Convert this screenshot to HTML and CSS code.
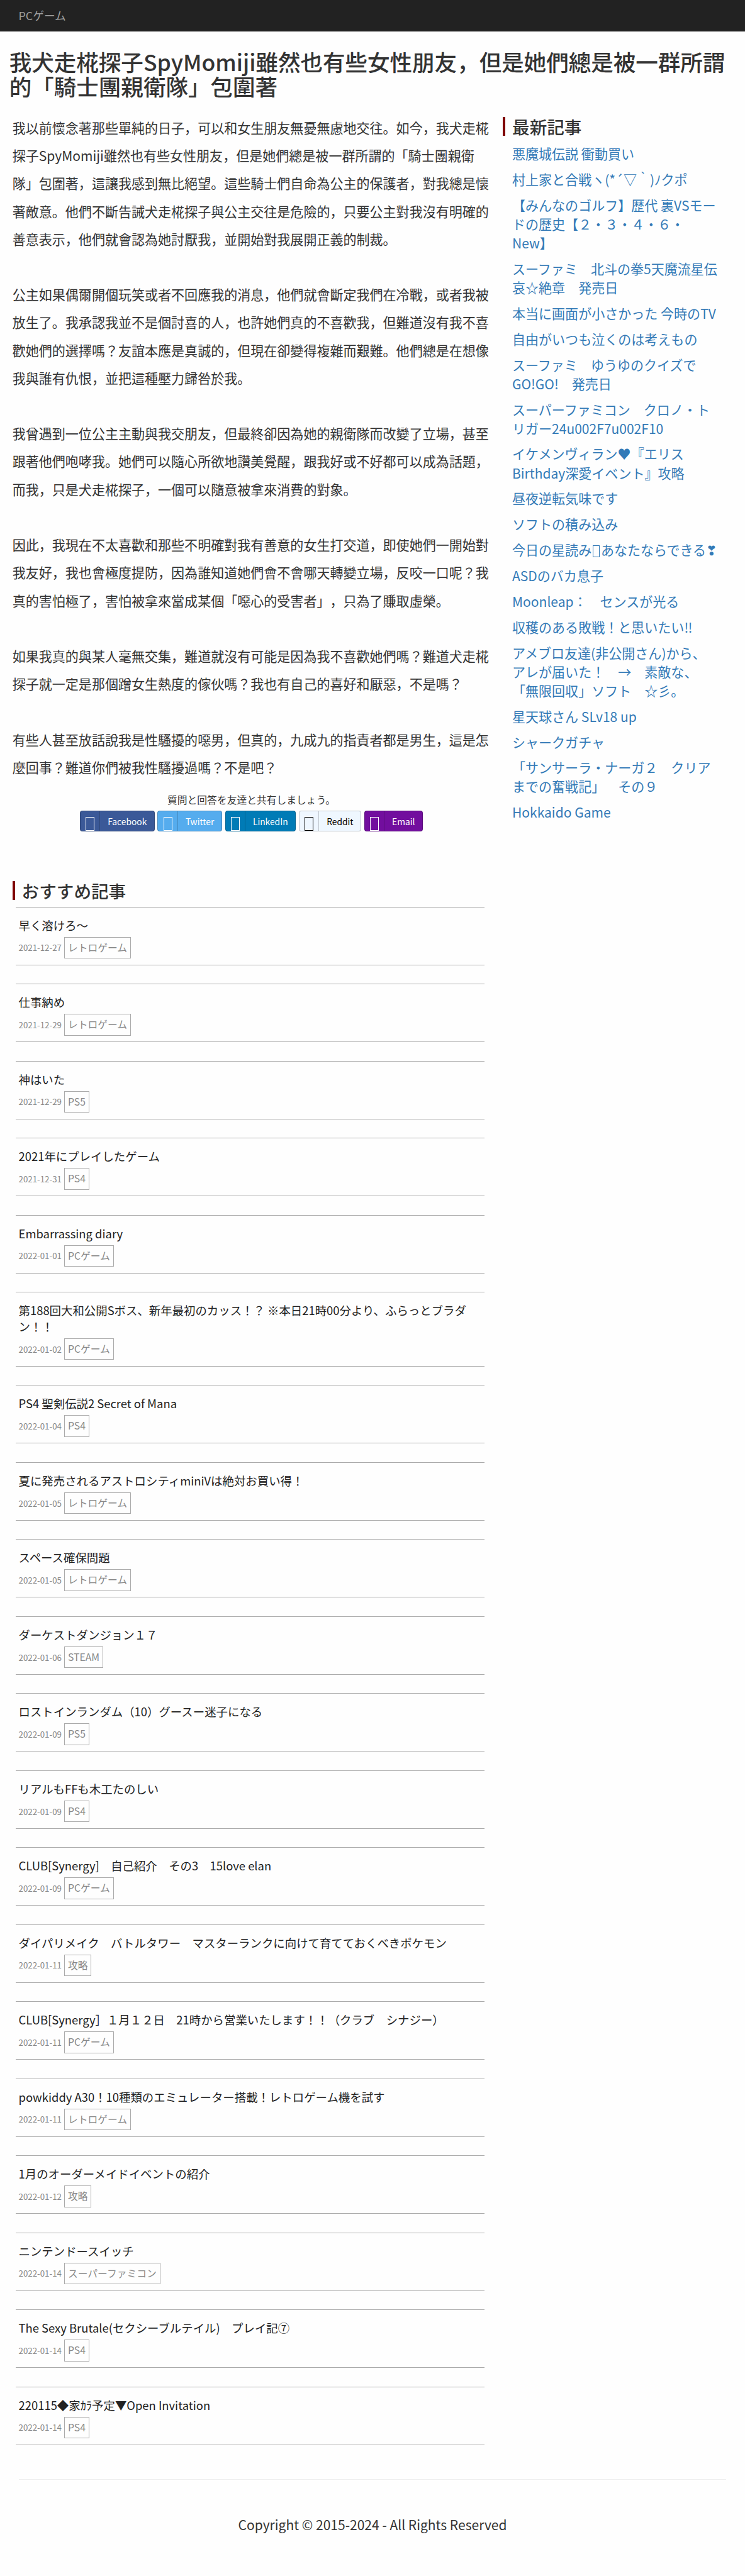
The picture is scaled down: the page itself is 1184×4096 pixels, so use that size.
FILE: index.html
```html
<!DOCTYPE html>
<html lang="ja">
<head>
    <meta charset="UTF-8">
    <meta name="viewport" content="width=device-width, initial-scale=1.0">
    <title>我犬走椛探子SpyMomiji</title>
    <link rel="stylesheet" href="styles.css">
</head>
<body>
    <nav class="navbar">
        <a class="navbar-brand" href="#">PCゲーム</a>
    </nav>

    <h1 class="page-title">我犬走椛探子SpyMomiji雖然也有些女性朋友，但是她們總是被一群所謂的「騎士團親衛隊」包圍著</h1>

    <div class="row">
        <main class="content">
            <div class="article">
                我以前懷念著那些單純的日子，可以和女生朋友無憂無慮地交往。如今，我犬走椛探子SpyMomiji雖然也有些女性朋友，但是她們總是被一群所謂的「騎士團親衛隊」包圍著，這讓我感到無比絕望。這些騎士們自命為公主的保護者，對我總是懷著敵意。他們不斷告誡犬走椛探子與公主交往是危險的，只要公主對我沒有明確的善意表示，他們就會認為她討厭我，並開始對我展開正義的制裁。<br><br>
                公主如果偶爾開個玩笑或者不回應我的消息，他們就會斷定我們在冷戰，或者我被放生了。我承認我並不是個討喜的人，也許她們真的不喜歡我，但難道沒有我不喜歡她們的選擇嗎？友誼本應是真誠的，但現在卻變得複雜而艱難。他們總是在想像我與誰有仇恨，並把這種壓力歸咎於我。<br><br>
                我曾遇到一位公主主動與我交朋友，但最終卻因為她的親衛隊而改變了立場，甚至跟著他們咆哮我。她們可以隨心所欲地讚美覺醒，跟我好或不好都可以成為話題，而我，只是犬走椛探子，一個可以隨意被拿來消費的對象。<br><br>
                因此，我現在不太喜歡和那些不明確對我有善意的女生打交道，即使她們一開始對我友好，我也會極度提防，因為誰知道她們會不會哪天轉變立場，反咬一口呢？我真的害怕極了，害怕被拿來當成某個「噁心的受害者」，只為了賺取虛榮。<br><br>
                如果我真的與某人毫無交集，難道就沒有可能是因為我不喜歡她們嗎？難道犬走椛探子就一定是那個蹭女生熱度的傢伙嗎？我也有自己的喜好和厭惡，不是嗎？<br><br>
                有些人甚至放話說我是性騷擾的噁男，但真的，九成九的指責者都是男生，這是怎麼回事？難道你們被我性騷擾過嗎？不是吧？
            </div>

            <div class="share">
                <p>質問と回答を友達と共有しましょう。</p>
                <div class="share-buttons">
                    <a class="btn facebook" href="#"><span class="icon"></span><span class="label">Facebook</span></a>
                    <a class="btn twitter" href="#"><span class="icon"></span><span class="label">Twitter</span></a>
                    <a class="btn linkedin" href="#"><span class="icon"></span><span class="label">LinkedIn</span></a>
                    <a class="btn reddit" href="#"><span class="icon"></span><span class="label">Reddit</span></a>
                    <a class="btn email" href="#"><span class="icon"></span><span class="label">Email</span></a>
                </div>
            </div>

            <h3 class="section-title">おすすめ記事</h3>
            <div class="posts">
                <div class="post">
                    <a class="post-title" href="#">早く溶けろ～</a>
                    <div class="meta"><span class="date">2021-12-27</span> <span class="tag">レトロゲーム</span></div>
                </div>
                <div class="post">
                    <a class="post-title" href="#">仕事納め</a>
                    <div class="meta"><span class="date">2021-12-29</span> <span class="tag">レトロゲーム</span></div>
                </div>
                <div class="post">
                    <a class="post-title" href="#">神はいた</a>
                    <div class="meta"><span class="date">2021-12-29</span> <span class="tag">PS5</span></div>
                </div>
                <div class="post">
                    <a class="post-title" href="#">2021年にプレイしたゲーム</a>
                    <div class="meta"><span class="date">2021-12-31</span> <span class="tag">PS4</span></div>
                </div>
                <div class="post">
                    <a class="post-title" href="#">Embarrassing diary</a>
                    <div class="meta"><span class="date">2022-01-01</span> <span class="tag">PCゲーム</span></div>
                </div>
                <div class="post">
                    <a class="post-title" href="#">第188回大和公開Sボス、新年最初のカッス！？ ※本日21時00分より、ふらっとブラダン！！</a>
                    <div class="meta"><span class="date">2022-01-02</span> <span class="tag">PCゲーム</span></div>
                </div>
                <div class="post">
                    <a class="post-title" href="#">PS4 聖剣伝説2 Secret of Mana</a>
                    <div class="meta"><span class="date">2022-01-04</span> <span class="tag">PS4</span></div>
                </div>
                <div class="post">
                    <a class="post-title" href="#">夏に発売されるアストロシティminiVは絶対お買い得！</a>
                    <div class="meta"><span class="date">2022-01-05</span> <span class="tag">レトロゲーム</span></div>
                </div>
                <div class="post">
                    <a class="post-title" href="#">スペース確保問題</a>
                    <div class="meta"><span class="date">2022-01-05</span> <span class="tag">レトロゲーム</span></div>
                </div>
                <div class="post">
                    <a class="post-title" href="#">ダーケストダンジョン１７</a>
                    <div class="meta"><span class="date">2022-01-06</span> <span class="tag">STEAM</span></div>
                </div>
                <div class="post">
                    <a class="post-title" href="#">ロストインランダム（10）グースー迷子になる</a>
                    <div class="meta"><span class="date">2022-01-09</span> <span class="tag">PS5</span></div>
                </div>
                <div class="post">
                    <a class="post-title" href="#">リアルもFFも木工たのしい</a>
                    <div class="meta"><span class="date">2022-01-09</span> <span class="tag">PS4</span></div>
                </div>
                <div class="post">
                    <a class="post-title" href="#">CLUB[Synergy]　自己紹介　その3　15love elan</a>
                    <div class="meta"><span class="date">2022-01-09</span> <span class="tag">PCゲーム</span></div>
                </div>
                <div class="post">
                    <a class="post-title" href="#">ダイパリメイク　バトルタワー　マスターランクに向けて育てておくべきポケモン</a>
                    <div class="meta"><span class="date">2022-01-11</span> <span class="tag">攻略</span></div>
                </div>
                <div class="post">
                    <a class="post-title" href="#">CLUB[Synergy］１月１２日　21時から営業いたします！！（クラブ　シナジー）</a>
                    <div class="meta"><span class="date">2022-01-11</span> <span class="tag">PCゲーム</span></div>
                </div>
                <div class="post">
                    <a class="post-title" href="#">powkiddy A30！10種類のエミュレーター搭載！レトロゲーム機を試す</a>
                    <div class="meta"><span class="date">2022-01-11</span> <span class="tag">レトロゲーム</span></div>
                </div>
                <div class="post">
                    <a class="post-title" href="#">1月のオーダーメイドイベントの紹介</a>
                    <div class="meta"><span class="date">2022-01-12</span> <span class="tag">攻略</span></div>
                </div>
                <div class="post">
                    <a class="post-title" href="#">ニンテンドースイッチ</a>
                    <div class="meta"><span class="date">2022-01-14</span> <span class="tag">スーパーファミコン</span></div>
                </div>
                <div class="post">
                    <a class="post-title" href="#">The Sexy Brutale(セクシーブルテイル)　プレイ記⑦</a>
                    <div class="meta"><span class="date">2022-01-14</span> <span class="tag">PS4</span></div>
                </div>
                <div class="post">
                    <a class="post-title" href="#">220115◆家ｶﾗ予定▼Open Invitation</a>
                    <div class="meta"><span class="date">2022-01-14</span> <span class="tag">PS4</span></div>
                </div>
            </div>
        </main>

        <aside class="sidebar">
            <h3 class="section-title">最新記事</h3>
            <ul class="latest">
                <li><a href="#">悪魔城伝説 衝動買い</a></li>
                <li><a href="#">村上家と合戦ヽ(*´▽｀)ﾉクポ</a></li>
                <li><a href="#">【みんなのゴルフ】歴代 裏VSモー<br>ドの歴史【２・３・４・６・<br>New】</a></li>
                <li><a href="#">スーファミ　北斗の拳5天魔流星伝<br>哀☆絶章　発売日</a></li>
                <li><a href="#">本当に画面が小さかった 今時のTV</a></li>
                <li><a href="#">自由がいつも泣くのは考えもの</a></li>
                <li><a href="#">スーファミ　ゆうゆのクイズで<br>GO!GO!　発売日</a></li>
                <li><a href="#">スーパーファミコン　クロノ・ト<br>リガー24u002F7u002F10</a></li>
                <li><a href="#">イケメンヴィラン♥『エリス<br>Birthday深愛イベント』攻略</a></li>
                <li><a href="#">昼夜逆転気味です</a></li>
                <li><a href="#">ソフトの積み込み</a></li>
                <li><a href="#">今日の星読み<span class="glyph-box"></span>あなたならできる&#x2763;</a></li>
                <li><a href="#">ASDのバカ息子</a></li>
                <li><a href="#">Moonleap：　センスが光る</a></li>
                <li><a href="#">収穫のある敗戦！と思いたい‼</a></li>
                <li><a href="#">アメブロ友達(非公開さん)から、<br>アレが届いた！　→　素敵な、<br>「無限回収」ソフト　☆彡。</a></li>
                <li><a href="#">星天球さん SLv18 up</a></li>
                <li><a href="#">シャークガチャ</a></li>
                <li><a href="#">「サンサーラ・ナーガ２　クリア<br>までの奮戦記」　その９</a></li>
                <li><a href="#">Hokkaido Game</a></li>
            </ul>
        </aside>
    </div>

    <footer class="footer">
        <p>Copyright © 2015-2024 - All Rights Reserved</p>
    </footer>
</body>
</html>
```
FILE: styles.css
```css
* {
    box-sizing: border-box;
}

html {
    background: #fefefe;
}

body {
    margin: 0;
    width: 1200px;
    zoom: 0.98667;
    background: #fefefe;
    color: #333;
    font-family: "Noto Sans CJK JP", "Noto Sans CJK TC", sans-serif;
    font-size: 21.33px;
    line-height: 1.42857;
    text-spacing-trim: space-all;
}

a {
    color: #337ab7;
    text-decoration: none;
}

.navbar {
    height: 51px;
    padding: 15px 30px;
    background: #222;
    border-bottom: 1px solid #080808;
    line-height: 20px;
}

.navbar-brand {
    display: block;
    color: #9d9d9d;
    font-size: 18px;
}

.page-title {
    margin: 28px 15px 0;
    font-size: 36px;
    font-weight: 500;
    line-height: 40px;
}

.row {
    display: flex;
    padding-top: 24.5px;
}

.content {
    width: 810px;
    padding: 0 20px;
}

.article {
    width: 770px;
    line-height: 44.8px;
}

.share {
    margin-top: 19.5px;
    width: 770px;
    text-align: center;
    font-size: 16px;
}

.share p {
    margin: 0 0 5px;
}

.share-buttons {
    display: flex;
    justify-content: center;
    gap: 4.4px;
}

.btn {
    display: flex;
    height: 34px;
    border: 1px solid rgba(0, 0, 0, 0.2);
    border-radius: 4px;
    color: #fff;
    line-height: 33px;
}

.btn .icon {
    display: flex;
    justify-content: center;
    width: 32px;
    padding-top: 10px;
    border-right: 1px solid rgba(0, 0, 0, 0.2);
}

.btn .icon::before {
    content: "";
    width: 12px;
    height: 20px;
    border: 1px solid currentColor;
}

.btn .label {
    padding: 0 12px;
    font-size: 14px;
}

.facebook {
    background: #3b5998;
}

.twitter {
    background: #55acee;
}

.linkedin {
    background: #007bb6;
}

.reddit {
    background: #eff7ff;
    color: #000;
}

.email {
    background: #720e9e;
}

.section-title {
    margin: 80px 0 10.5px;
    padding-left: 11px;
    border-left: 5px solid #800000;
    font-size: 28px;
    font-weight: 500;
    line-height: 1.1;
}

.posts {
    margin: 0 10px 0 5px;
}

.post {
    margin-bottom: 30px;
    padding: 16px 5px 9.7px;
    border-top: 1px solid #aaa;
    border-bottom: 1px solid #aaa;
}

.post-title {
    display: block;
    color: #222;
    font-size: 18.67px;
    line-height: 26.1px;
}

.meta {
    display: flex;
    align-items: center;
    gap: 4.2px;
    margin-top: 5.5px;
    color: #888;
}

.date {
    font-size: 13.5px;
}

.tag {
    padding: 5px;
    border: 1px solid #aaa;
    font-size: 16px;
}

.sidebar {
    width: 390px;
}

.sidebar .section-title {
    margin: 5px 0 13px;
}

.latest {
    margin: 0 0 0 15px;
    padding: 0;
    list-style: none;
}

.latest li {
    margin-bottom: 10.97px;
    white-space: nowrap;
}

.glyph-box {
    display: inline-block;
    width: 11px;
    height: 19px;
    margin: 0 2px;
    border: 1px solid currentColor;
    vertical-align: -3px;
}

.footer {
    margin: 25px 30px 0;
    padding-top: 57px;
    border-top: 1px solid #eee;
    text-align: center;
}

.footer p {
    margin: 0;
}
```
